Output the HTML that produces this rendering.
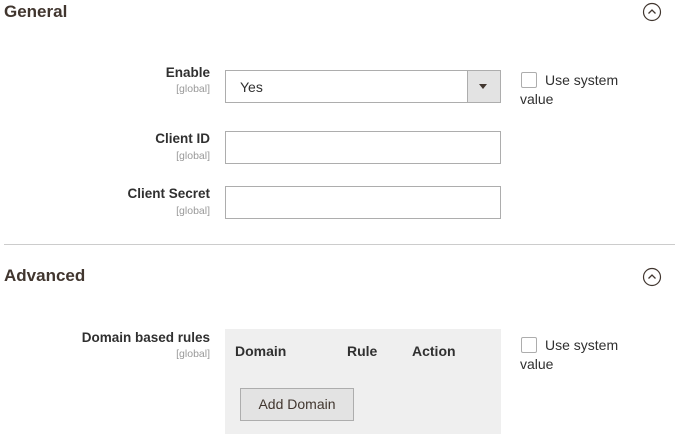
<!DOCTYPE html>
<html><head><meta charset="utf-8"><style>
*{box-sizing:border-box;margin:0;padding:0}
body{width:680px;height:438px;background:#fff;font-family:"Liberation Sans",sans-serif;color:#303030;position:relative;overflow:hidden}
.a{position:absolute}
.h{font-size:17px;font-weight:bold;color:#41362f;left:4px}
.lbl{right:470px;text-align:right;font-size:13.5px;font-weight:bold;color:#303030;white-space:nowrap}
.sc{right:470px;font-size:10.5px;color:#999;white-space:nowrap}
.inp{border:1px solid #adadad;background:#fff;left:225px;width:276px;height:33px}
.cb{width:16px;height:16px;border:1px solid #adadad;border-radius:2px;left:521px;background:#fff}
.uv{font-size:14px;color:#303030;line-height:19px;left:520px}
</style></head><body>
<div class="a h" style="top:2px">General</div>
<svg class="a" style="left:642px;top:2px" width="20" height="20"><circle cx="10" cy="10" r="8.5" fill="none" stroke="#41362f" stroke-width="1.2"/><path d="M6.5 11.5 L10 8 L13.5 11.5" fill="none" stroke="#41362f" stroke-width="1.3"/></svg>

<div class="a lbl" style="top:65px">Enable</div>
<div class="a sc" style="top:83px">[global]</div>
<div class="a inp" style="top:70px"><span class="a" style="left:14px;top:8px;font-size:14px">Yes</span><div class="a" style="right:0;top:0;width:33px;height:31px;background:#e3e3e3;border-left:1px solid #adadad"></div><svg class="a" style="right:12px;top:13px" width="9" height="6"><path d="M0 0H8L4 5Z" fill="#41362f"/></svg></div>
<div class="a cb" style="top:72px"></div>
<div class="a uv" style="top:71px"><span style="padding-left:25px">Use system</span><br>value</div>

<div class="a lbl" style="top:131px">Client ID</div>
<div class="a sc" style="top:150px">[global]</div>
<div class="a inp" style="top:131px"></div>

<div class="a lbl" style="top:186px">Client Secret</div>
<div class="a sc" style="top:205px">[global]</div>
<div class="a inp" style="top:186px"></div>

<div class="a" style="left:4px;top:244px;width:671px;height:1px;background:#cccccc"></div>

<div class="a h" style="top:266px">Advanced</div>
<svg class="a" style="left:642px;top:267px" width="20" height="20"><circle cx="10" cy="10" r="8.5" fill="none" stroke="#41362f" stroke-width="1.2"/><path d="M6.5 11.5 L10 8 L13.5 11.5" fill="none" stroke="#41362f" stroke-width="1.3"/></svg>

<div class="a lbl" style="top:330px">Domain based rules</div>
<div class="a sc" style="top:348px">[global]</div>
<div class="a" style="left:225px;top:329px;width:276px;height:105px;background:#efefef"></div>
<div class="a" style="left:235px;top:343px;font-size:14px;font-weight:bold">Domain</div>
<div class="a" style="left:347px;top:343px;font-size:14px;font-weight:bold">Rule</div>
<div class="a" style="left:412px;top:343px;font-size:14px;font-weight:bold">Action</div>
<div class="a" style="left:240px;top:388px;width:114px;height:33px;background:#e3e3e3;border:1px solid #adadad;font-size:14px;text-align:center;line-height:31px;color:#41362f">Add Domain</div>
<div class="a cb" style="top:337px"></div>
<div class="a uv" style="top:336px"><span style="padding-left:25px">Use system</span><br>value</div>
</body></html>
